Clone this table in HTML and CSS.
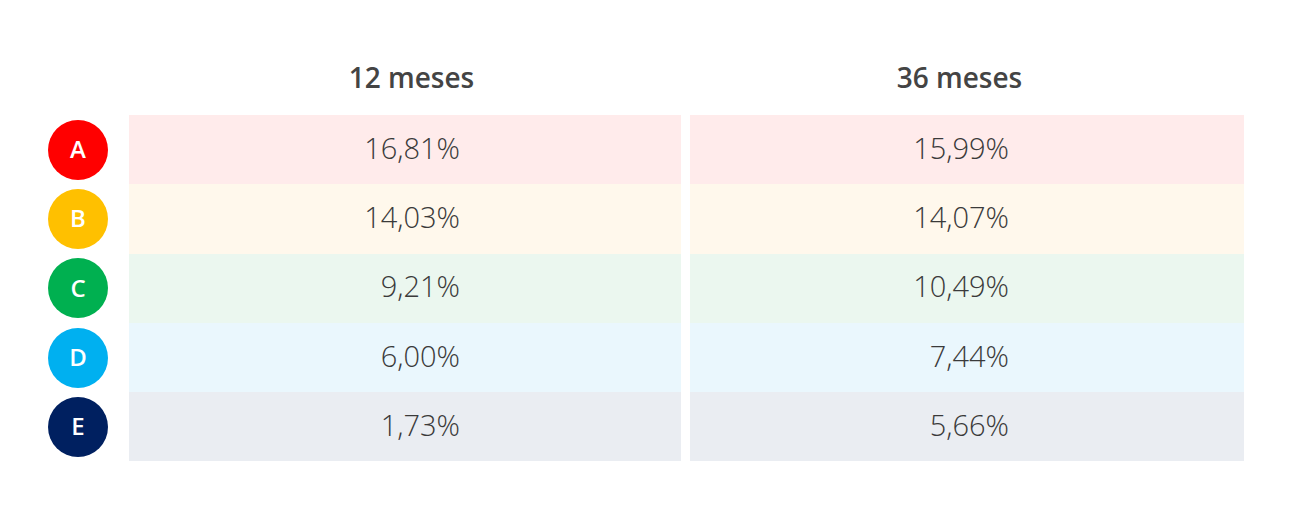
FILE: index.html
```html
<!DOCTYPE html>
<html lang="es">
<head>
<meta charset="utf-8">
<title>Rentabilidad</title>
<link rel="stylesheet" href="styles.css">
</head>
<body>
<div class="table">
  <div class="head">
    <div class="spacer"></div>
    <div class="h h1">12 meses</div>
    <div class="h h2">36 meses</div>
  </div>
  <div class="row ra">
    <div class="badge-cell"><span class="badge">A</span></div>
    <div class="cell c1">16,81%</div>
    <div class="cell c2">15,99%</div>
  </div>
  <div class="row rb">
    <div class="badge-cell"><span class="badge">B</span></div>
    <div class="cell c1">14,03%</div>
    <div class="cell c2">14,07%</div>
  </div>
  <div class="row rc">
    <div class="badge-cell"><span class="badge">C</span></div>
    <div class="cell c1">9,21%</div>
    <div class="cell c2">10,49%</div>
  </div>
  <div class="row rd">
    <div class="badge-cell"><span class="badge">D</span></div>
    <div class="cell c1">6,00%</div>
    <div class="cell c2">7,44%</div>
  </div>
  <div class="row re">
    <div class="badge-cell"><span class="badge">E</span></div>
    <div class="cell c1">1,73%</div>
    <div class="cell c2">5,66%</div>
  </div>
</div>
</body>
</html>
```
FILE: styles.css
```css
html, body {
  margin: 0;
  padding: 0;
  background: #ffffff;
}
body {
  font-family: "Open Sans", "Liberation Sans", sans-serif;
  color: #4a4a4a;
}
.table {
  padding-left: 48px;
}
.head {
  display: flex;
  padding-top: 57px;
  height: 40px;
  margin-bottom: 18px;
}
.spacer {
  width: 81px;
  flex: none;
}
.h {
  font-size: 28px;
  font-weight: 600;
  line-height: 40px;
  text-align: center;
  color: #444444;
  box-sizing: border-box;
}
.h1 {
  width: 552px;
  padding-left: 13px;
}
.h2 {
  width: 554px;
  margin-left: 9px;
  padding-right: 15px;
}
.row {
  display: flex;
  height: 69.3px;
}
.badge-cell {
  width: 81px;
  flex: none;
  display: flex;
  align-items: center;
}
.badge {
  width: 60px;
  height: 60px;
  border-radius: 50%;
  display: flex;
  align-items: center;
  justify-content: center;
  color: #ffffff;
  font-size: 24px;
  font-weight: 600;
  line-height: 1;
  padding-bottom: 1px;
  box-sizing: border-box;
}
.cell {
  box-sizing: border-box;
  display: flex;
  align-items: center;
  justify-content: flex-end;
  font-size: 29px;
  font-weight: 350;
  padding-bottom: 5px;
  color: #3a3a3a;
}
.c1 {
  width: 552px;
  padding-right: 221px;
}
.c2 {
  width: 554px;
  margin-left: 9px;
  padding-right: 235px;
}
.ra .badge { background: #ff0000; }
.rb .badge { background: #ffc000; }
.rc .badge { background: #00b050; }
.rd .badge { background: #00b0f0; }
.re .badge { background: #002060; }
.ra .cell { background: #ffebeb; }
.rb .cell { background: #fff8ec; }
.rc .cell { background: #ebf7ef; }
.rd .cell { background: #eaf7fd; }
.re .cell { background: #eaedf2; }
```
